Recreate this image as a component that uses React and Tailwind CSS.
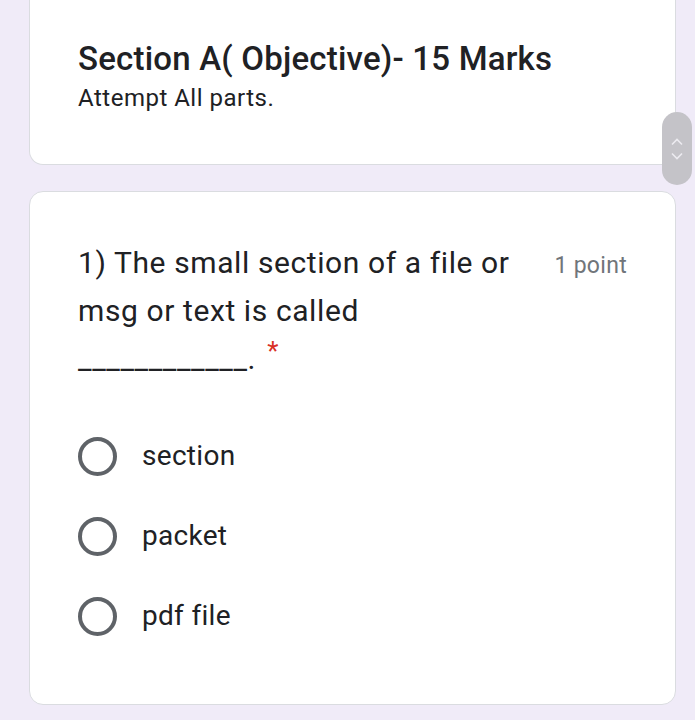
import React from "react";

function Radio({ label }) {
  return (
    <div className="flex h-[80px] items-center">
      <div className="h-[39px] w-[39px] shrink-0 rounded-full border-[4px] border-[#5f6368]" />
      <span className="ml-[25px] text-[28px] tracking-[0.3px] text-[#202124]">{label}</span>
    </div>
  );
}

export default function App() {
  return (
    <div
      className="relative min-h-[720px] w-[695px] overflow-hidden bg-[#f0ebf8] pl-[29px] pr-[19px]"
      style={{ fontFamily: "Roboto, 'Noto Sans', sans-serif" }}
    >
      <div className="h-[165px] rounded-b-[14px] border border-t-0 border-[#dadce0] bg-white px-[48px] pt-[37px]">
        <h1 className="text-[33px] font-medium leading-[44px] tracking-[0.2px] text-[#202124]">
          Section A( Objective)- 15 Marks
        </h1>
        <p className="mt-0 text-[24px] leading-[34px] tracking-[0.5px] text-[#202124]">Attempt All parts.</p>
      </div>

      <div className="mt-[26px] h-[514px] rounded-[14px] border border-[#dadce0] bg-white px-[48px] pt-[47px]">
        <div className="flex items-start">
          <div className="w-[445px] text-[30px] leading-[48px] tracking-[0.6px] text-[#202124]">
            1) The small section of a file or msg or text is called ____________.
            <span className="relative top-[-9px] ml-[11px] text-[26px] text-[#d93025]">*</span>
          </div>
          <div className="ml-auto mt-[13px] text-[23px] leading-[28px] tracking-[0.3px] text-[#70757a]">1 point</div>
        </div>
        <div className="mt-[32px] flex flex-col">
          <Radio label="section" />
          <Radio label="packet" />
          <Radio label="pdf file" />
        </div>
      </div>

      <div className="absolute left-[662px] top-[112px] flex h-[73px] w-[30px] flex-col items-center justify-center gap-[6px] rounded-full bg-[#c4c3c8]">
        <svg width="12" height="8" viewBox="0 0 12 8" fill="none" stroke="#ecebf0" strokeWidth="1.6">
          <path d="M1 6.5 L6 1.5 L11 6.5" />
        </svg>
        <svg width="12" height="8" viewBox="0 0 12 8" fill="none" stroke="#ecebf0" strokeWidth="1.6">
          <path d="M1 1.5 L6 6.5 L11 1.5" />
        </svg>
      </div>
    </div>
  );
}
